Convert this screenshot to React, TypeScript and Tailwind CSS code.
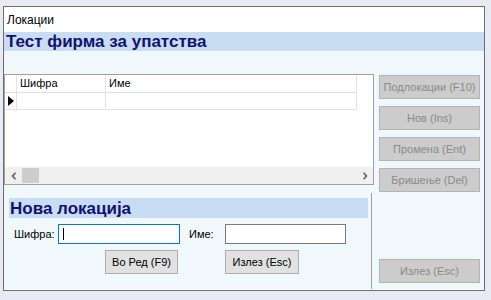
import React from "react";

const F = { fontFamily: '"Liberation Sans", Arial, sans-serif' } as const;

function SideButton({ label, className = "" }: { label: string; className?: string }) {
  return (
    <div
      className={`h-[24px] w-[101px] flex items-center justify-center border border-[#b4b4b4] bg-[#cccccc] text-[11px] text-[#8a8a8a] ${className}`}
    >
      {label}
    </div>
  );
}

export default function App() {
  return (
    <div style={F} className="w-[491px] h-[300px] bg-[#e8ebf3] pt-[6px] pl-[3px] overflow-hidden">
      <div className="w-[482px] h-[285px] border border-[#6f6f6f] bg-[#f0f8fc] flex flex-col">
        <div className="h-[25px] shrink-0 bg-white flex items-center pl-[3px] text-[12px] text-black">
          Локации
        </div>
        <div className="h-[19px] shrink-0 bg-[#c8dcf4] flex items-center pl-[2px] text-[17px] font-bold text-[#12126e] leading-none">
          Тест фирма за упатства
        </div>
        <div className="flex flex-1 border-b border-white">
          {/* left column */}
          <div className="flex flex-col w-[370px]">
            <div className="mt-[23px] h-[111px] border border-[#a0a0a0] bg-white flex flex-col">
              <div className="flex h-[18px] w-[352px] border-b border-[#e2e2e2] text-[11px] text-black">
                <div className="w-[12px] border-r border-[#e2e2e2]" />
                <div className="w-[89px] border-r border-[#e2e2e2] flex items-center pl-[3px]">Шифра</div>
                <div className="w-[251px] border-r border-[#e2e2e2] flex items-center pl-[3px]">Име</div>
              </div>
              <div className="flex h-[17px] w-[352px] border-b border-[#e2e2e2]">
                <div className="w-[12px] border-r border-[#e2e2e2] flex items-center justify-center">
                  <svg width="6" height="10" viewBox="0 0 6 10">
                    <polygon points="0,0 6,5 0,10" fill="#000" />
                  </svg>
                </div>
                <div className="w-[89px] border-r border-[#e2e2e2]" />
                <div className="w-[251px] border-r border-[#e2e2e2]" />
              </div>
              <div className="flex-1" />
              <div className="h-[17px] bg-[#f0f0f0] flex items-center">
                <div className="w-[17px] h-[17px] flex items-center justify-center">
                  <svg width="6" height="8" viewBox="0 0 6 8">
                    <polyline points="4.5,0.8 1.5,4 4.5,7.2" fill="none" stroke="#606060" strokeWidth="1.6" />
                  </svg>
                </div>
                <div className="w-[17px] h-[15px] bg-[#cdcdcd]" />
                <div className="flex-1" />
                <div className="w-[17px] h-[17px] flex items-center justify-center">
                  <svg width="6" height="8" viewBox="0 0 6 8">
                    <polyline points="1.5,0.8 4.5,4 1.5,7.2" fill="none" stroke="#606060" strokeWidth="1.6" />
                  </svg>
                </div>
              </div>
            </div>
            {/* bottom panel */}
            <div className="mt-[8px] flex-1 w-[368px] border-r border-[#a0a0a0] pt-[5px] pl-[5px]">
              <div className="h-[20px] w-[359px] bg-[#c8dcf4] flex items-center pl-[1px] text-[17px] font-bold text-[#12126e] leading-none">
                Нова локација
              </div>
              <div className="mt-[6px] flex items-center h-[20px] text-[11px] text-black">
                <span className="ml-[5px] w-[44px]">Шифра:</span>
                <div className="w-[122px] h-[20px] border border-[#0078d7] bg-white flex items-center pl-[4px]">
                  <div className="w-[1px] h-[12px] bg-black" />
                </div>
                <span className="ml-[9px] w-[36px]">Име:</span>
                <div className="w-[121px] h-[20px] border border-[#7a7a7a] bg-white" />
              </div>
              <div className="mt-[6px] flex h-[24px] text-[11px] text-black">
                <div className="ml-[96px] w-[73px] h-[24px] border border-[#adadad] bg-[#e1e1e1] flex items-center justify-center">
                  Во Ред (F9)
                </div>
                <div className="ml-[47px] w-[74px] h-[24px] border border-[#adadad] bg-[#e1e1e1] flex items-center justify-center">
                  Излез (Esc)
                </div>
              </div>
            </div>
          </div>
          {/* right column */}
          <div className="ml-[5px] flex flex-col">
            <div className="mt-[24px] flex flex-col gap-[7px]">
              <SideButton label="Подлокации (F10)" />
              <SideButton label="Нов (Ins)" />
              <SideButton label="Промена (Ent)" />
              <SideButton label="Бришење (Del)" />
            </div>
            <SideButton label="Излез (Esc)" className="mt-auto mb-[6px]" />
          </div>
        </div>
      </div>
    </div>
  );
}
